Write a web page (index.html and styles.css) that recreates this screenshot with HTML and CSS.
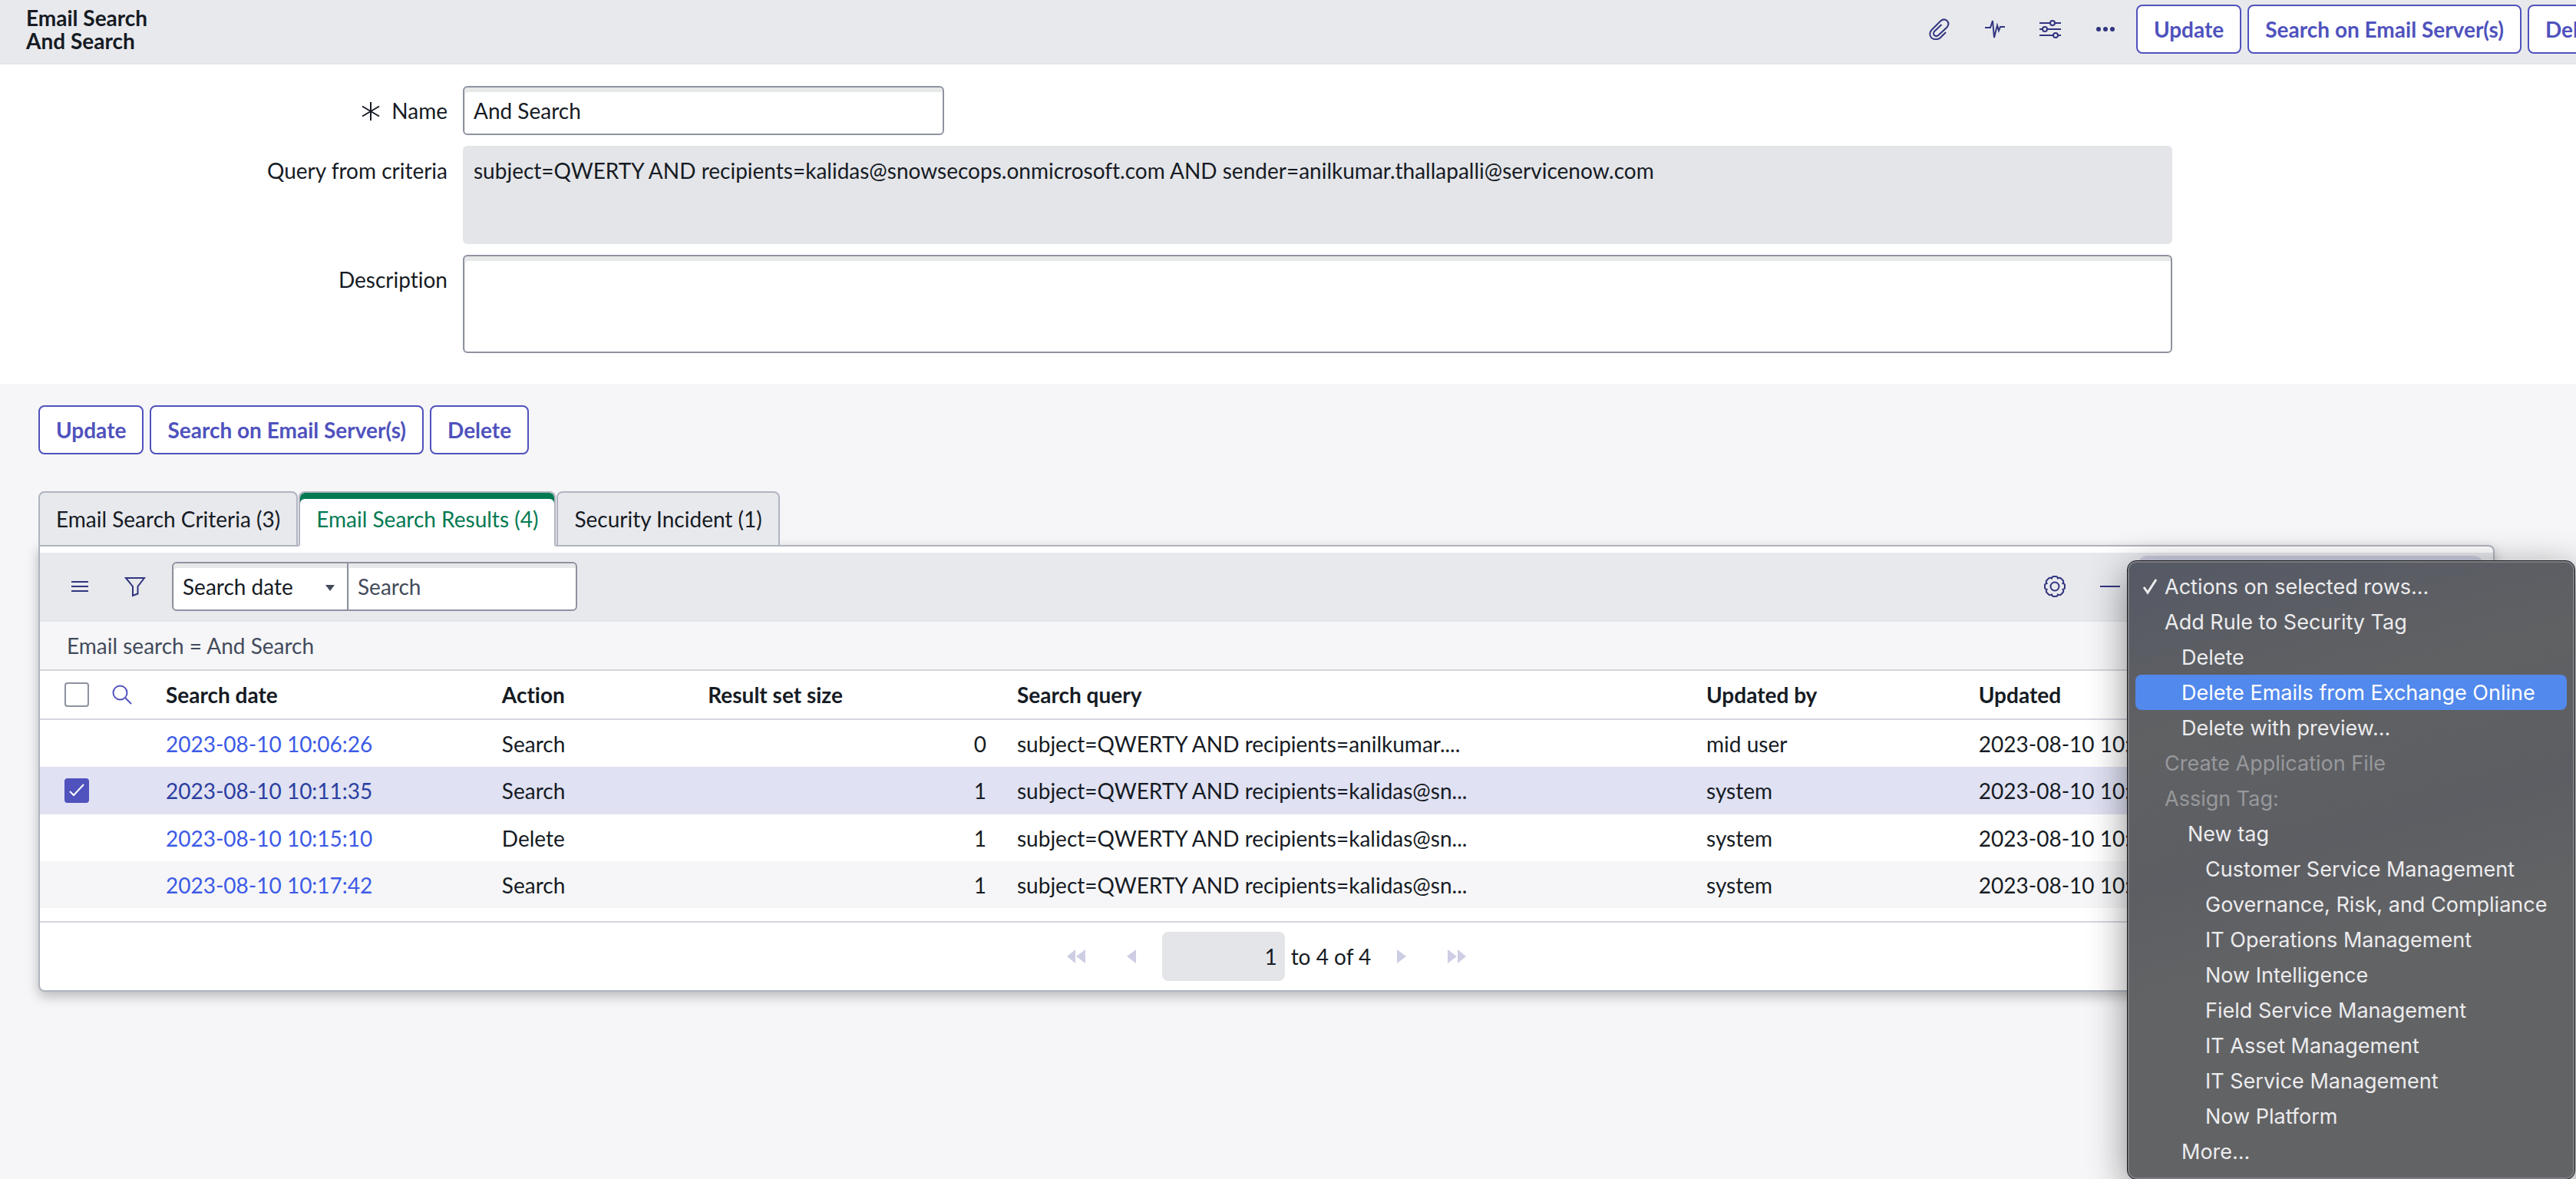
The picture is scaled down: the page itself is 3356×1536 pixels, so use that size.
FILE: index.html
```html
<!DOCTYPE html>
<html lang="en">
<head>
  <meta charset="UTF-8" />
  <title>And Search | Email Search</title>
  <link rel="stylesheet" href="styles.css">
</head>
<body>
  <header class="header">
    <h1 class="title">Email Search<br />And Search</h1>
    <div class="header-actions">
      <button class="icon-btn" aria-label="Attachments">
        <svg width="28" height="28" viewBox="0 0 28 28"><path d="M22 18l-7 7c-3 2.800-8 3-11.500.500-3-3-3-7.500 0-10.500L15 3.500c3-2.700 6-2.700 8.500-.500 2.500 2.500 2.500 5.500 0 8.500l-11 10.200c-2 1.800-4 1.800-5.500.300S5.800 18 7.500 16.500l9-8.500" /></svg>
      </button>
      <button class="icon-btn" aria-label="Activity">
        <svg width="28" height="28" viewBox="0 0 28 28"><path d="M1 12h7l3-9 2 22L17 9l2 7 2-5h6" /></svg>
      </button>
      <button class="icon-btn" aria-label="Personalize form">
        <svg width="28" height="28" viewBox="0 0 28 28"><path d="M0 6h14M20 6h8M0 14h4M10 14h18M0 22h18M24 22h4" /><circle cx="17" cy="6" r="3" /><circle cx="7" cy="14" r="3" /><circle cx="21" cy="22" r="3" /></svg>
      </button>
      <button class="icon-btn" aria-label="More options">
        <svg class="solid" width="28" height="28" viewBox="0 0 28 28"><circle cx="5" cy="14" r="3" /><circle cx="14" cy="14" r="3" /><circle cx="23" cy="14" r="3" /></svg>
      </button>
      <button class="btn">Update</button>
      <button class="btn">Search on Email Server(s)</button>
      <button class="btn">Delete</button>
    </div>
  </header>

  <form class="form">
    <label class="label" for="name">
      <svg class="required" width="26" height="26" viewBox="0 0 26 26"><path d="M13 1v24M2 6.500l22 13M24 6.500l-22 13" /></svg>
      Name
    </label>
    <input class="field name-field" type="text" id="name" value="And Search" />
    <label class="label" for="query">Query from criteria</label>
    <textarea class="field readonly" id="query" readonly>subject=QWERTY AND recipients=kalidas@snowsecops.onmicrosoft.com AND sender=anilkumar.thallapalli@servicenow.com</textarea>
    <label class="label" for="description">Description</label>
    <textarea class="field" id="description"></textarea>
  </form>

  <main class="main">
    <div class="form-buttons">
      <button class="btn">Update</button>
      <button class="btn">Search on Email Server(s)</button>
      <button class="btn">Delete</button>
    </div>

    <div class="tabs" role="tablist">
      <button class="tab" role="tab">Email Search Criteria (3)</button>
      <button class="tab active" role="tab" aria-selected="true">Email Search Results (4)</button>
      <button class="tab" role="tab">Security Incident (1)</button>
    </div>

    <section class="panel">
      <div class="toolbar">
        <button class="tool-btn" aria-label="List controls">
          <svg width="24" height="28" viewBox="0 0 24 28"><path d="M1 8h22M1 14h22M1 20h22" /></svg>
        </button>
        <button class="tool-btn" aria-label="Filter">
          <svg width="28" height="28" viewBox="0 0 28 28"><path d="M2 3h24l-8.500 11v9.500L11 26V14z" /></svg>
        </button>
        <div class="search-group">
          <div class="select-wrap">
            <select class="field search-field" aria-label="Search field">
              <option>Search date</option>
            </select>
            <svg class="caret" width="12" height="8" viewBox="0 0 12 8"><path d="M0 0h12L6 8z" /></svg>
          </div>
          <input class="field search-text" type="text" placeholder="Search" aria-label="Search" />
        </div>
        <div class="toolbar-right">
          <button class="tool-btn" aria-label="Personalize list">
            <svg width="30" height="30" viewBox="0 0 30 30"><path d="M11 4.500Q11.500 2 13.500 2h3Q18.500 2 19 4.500Q21.500 3 23 4.500L25.500 7Q27 8.500 25.500 11Q28 11.500 28 13.500v3Q28 18.500 25.500 19Q27 21.500 25.500 23L23 25.500Q21.500 27 19 25.500Q18.500 28 16.500 28h-3Q11.500 28 11 25.500Q8.500 27 7 25.500L4.500 23Q3 21.500 4.500 19Q2 18.500 2 16.500v-3Q2 11.500 4.500 11Q3 8.500 4.500 7L7 4.500Q8.500 3 11 4.500z" /><circle cx="15" cy="15" r="5.500" /></svg>
          </button>
          <button class="tool-btn" aria-label="Collapse">
            <svg width="26" height="28" viewBox="0 0 26 28"><path d="M0 14h26" /></svg>
          </button>
          <div class="row-actions">
            <select class="actions-select" aria-label="Actions on selected rows">
              <option>Actions on selected rows...</option>
            </select>
            <div class="menu" role="menu">
              <button class="item" role="menuitem">
                <svg class="tick" width="20" height="22" viewBox="0 0 20 22"><path d="M2 12l5 7L18 2" /></svg>Actions on selected rows...
              </button>
              <button class="item" role="menuitem">Add Rule to Security Tag</button>
              <button class="item indent" role="menuitem">Delete</button>
              <button class="item indent highlighted" role="menuitem">Delete Emails from Exchange Online</button>
              <button class="item indent" role="menuitem">Delete with preview...</button>
              <button class="item" role="menuitem" disabled>Create Application File</button>
              <button class="item" role="menuitem" disabled>Assign Tag:</button>
              <button class="item tag" role="menuitem">New tag</button>
              <button class="item subtag" role="menuitem">Customer Service Management</button>
              <button class="item subtag" role="menuitem">Governance, Risk, and Compliance</button>
              <button class="item subtag" role="menuitem">IT Operations Management</button>
              <button class="item subtag" role="menuitem">Now Intelligence</button>
              <button class="item subtag" role="menuitem">Field Service Management</button>
              <button class="item subtag" role="menuitem">IT Asset Management</button>
              <button class="item subtag" role="menuitem">IT Service Management</button>
              <button class="item subtag" role="menuitem">Now Platform</button>
              <button class="item indent" role="menuitem">More...</button>
            </div>
          </div>
        </div>
      </div>

      <div class="breadcrumb">Email search = And Search</div>

      <table class="list">
        <colgroup>
          <col class="col-check" />
          <col class="col-date" />
          <col class="col-action" />
          <col class="col-size" />
          <col class="col-query" />
          <col class="col-by" />
          <col />
        </colgroup>
        <thead>
          <tr>
            <th>
              <div class="check-cell">
                <input class="check" type="checkbox" aria-label="Select all" />
                <button class="find" aria-label="Search columns">
                  <svg width="26" height="26" viewBox="0 0 26 26"><circle cx="10.500" cy="10.500" r="9" /><path d="M17 17l8 8" /></svg>
                </button>
              </div>
            </th>
            <th>Search date</th>
            <th>Action</th>
            <th>Result set size</th>
            <th>Search query</th>
            <th>Updated by</th>
            <th>Updated</th>
          </tr>
        </thead>
        <tbody>
          <tr>
            <td></td>
            <td><a href="#">2023-08-10 10:06:26</a></td>
            <td>Search</td>
            <td class="num">0</td>
            <td>subject=QWERTY AND recipients=anilkumar....</td>
            <td>mid user</td>
            <td>2023-08-10 10:06:26</td>
          </tr>
          <tr class="selected">
            <td><div class="check-cell"><input class="check" type="checkbox" aria-label="Select row" checked /></div></td>
            <td><a href="#">2023-08-10 10:11:35</a></td>
            <td>Search</td>
            <td class="num">1</td>
            <td>subject=QWERTY AND recipients=kalidas@sn...</td>
            <td>system</td>
            <td>2023-08-10 10:11:35</td>
          </tr>
          <tr>
            <td></td>
            <td><a href="#">2023-08-10 10:15:10</a></td>
            <td>Delete</td>
            <td class="num">1</td>
            <td>subject=QWERTY AND recipients=kalidas@sn...</td>
            <td>system</td>
            <td>2023-08-10 10:15:10</td>
          </tr>
          <tr class="striped">
            <td></td>
            <td><a href="#">2023-08-10 10:17:42</a></td>
            <td>Search</td>
            <td class="num">1</td>
            <td>subject=QWERTY AND recipients=kalidas@sn...</td>
            <td>system</td>
            <td>2023-08-10 10:17:42</td>
          </tr>
        </tbody>
      </table>

      <div class="pager">
        <button class="page-btn end" aria-label="First page" disabled>
          <svg width="24" height="18" viewBox="0 0 24 18"><path d="M11 0v18L0 9zM24 0v18L12 9z" /></svg>
        </button>
        <button class="page-btn" aria-label="Previous page" disabled>
          <svg width="12" height="18" viewBox="0 0 12 18"><path d="M12 0v18L0 9z" /></svg>
        </button>
        <input class="page-input" type="text" value="1" aria-label="Go to row" readonly />
        <span class="page-text">to 4 of 4</span>
        <button class="page-btn" aria-label="Next page" disabled>
          <svg width="12" height="18" viewBox="0 0 12 18"><path d="M0 0v18l12-9z" /></svg>
        </button>
        <button class="page-btn end" aria-label="Last page" disabled>
          <svg width="24" height="18" viewBox="0 0 24 18"><path d="M0 0v18l12-9zM13 0v18l11-9z" /></svg>
        </button>
      </div>
    </section>
  </main>
</body>
</html>
```
FILE: styles.css
```css
* {
  box-sizing: border-box;
}
body {
  margin: 0;
  min-height: 100vh;
  overflow: hidden;
  background: #f6f6f8;
  color: #161b24;
  font-family: Lato, sans-serif;
  font-size: 28px;
  font-variant-ligatures: none;
}
button, input, select, textarea {
  margin: 0;
  font: inherit;
  font-variant-ligatures: none;
  color: inherit;
}
button {
  padding: 0;
  border: none;
  background: none;
}
svg {
  display: block;
  fill: none;
  stroke: #32357f;
  stroke-width: 2;
}
svg.solid {
  fill: #32357f;
  stroke: none;
}

/* header */
.header {
  display: flex;
  justify-content: space-between;
  align-items: flex-start;
  min-height: 84px;
  padding: 6px 0 0 34px;
  overflow: hidden;
  background: #e8e9ed;
  border-bottom: 2px solid #e3e5e6;
}
.title {
  margin: 2px 0 0;
  font-size: 28px;
  line-height: 30px;
  font-weight: bold;
}
.header-actions {
  display: flex;
  gap: 8px;
  margin-right: -66px;
}
.icon-btn {
  display: flex;
  align-items: center;
  justify-content: center;
  width: 64px;
  height: 64px;
}
.btn {
  height: 64px;
  padding: 0 21px;
  border: 2px solid #4f52bd;
  border-radius: 8px;
  background: #fff;
  color: #4f52bd;
  font-weight: bold;
  white-space: nowrap;
}

/* form */
.form {
  display: grid;
  grid-template-columns: 583fr 2227fr 506fr;
  gap: 14px 20px;
  padding: 28px 0 40px;
  background: #fff;
}
.label {
  grid-column: 1;
  display: flex;
  justify-content: flex-end;
  gap: 14px;
  padding-top: 12px;
  line-height: 40px;
}
.required {
  margin-top: 8px;
  stroke: #161b24;
}
.field {
  height: 64px;
  padding: 0 12px;
  border: 2px solid #8e92a0;
  border-radius: 6px;
  background: #fff;
  box-shadow: inset 1px 6px 0 #e7e9e8;
}
.form .field {
  grid-column: 2;
  width: 100%;
}
.form .name-field {
  width: 627px;
}
textarea.field {
  display: block;
  height: 128px;
  padding: 10px 12px;
  line-height: 40px;
  resize: none;
}
.form .readonly {
  border-color: #e4e5e9;
  background: #e4e5e9;
  box-shadow: none;
}

/* related lists */
.main {
  padding: 28px 106px 0 50px;
}
.form-buttons {
  display: flex;
  gap: 8px;
  margin-bottom: 48px;
}
.tabs {
  position: relative;
  z-index: 1;
  display: flex;
  gap: 1px;
  margin-bottom: -2px;
}
.tab {
  height: 72px;
  padding: 0 21px;
  border: 2px solid #b0b4c0;
  border-radius: 8px 8px 0 0;
  background: #e8e9ed;
}
.tab.active {
  border-bottom-color: #fff;
  background: #fff;
  color: #047a52;
  box-shadow: inset 0 8px 0 #047a52;
}
.panel {
  padding-top: 8px;
  border: 2px solid #b0b4c0;
  border-radius: 0 8px 8px 8px;
  background: #fff;
  box-shadow: 0 6px 16px rgba(0, 0, 0, 0.25);
}
.toolbar {
  display: flex;
  align-items: center;
  height: 90px;
  padding: 0 20px 0 16px;
  background: #e8e9ed;
  border-bottom: 2px solid #e4e5ea;
}
.tool-btn {
  display: flex;
  align-items: center;
  justify-content: center;
  width: 72px;
  height: 64px;
}
.search-group {
  display: flex;
  margin-left: 12px;
}
.select-wrap {
  position: relative;
}
.search-field {
  display: block;
  width: 230px;
  appearance: none;
  border-radius: 6px 0 0 6px;
}
.caret {
  position: absolute;
  right: 18px;
  top: 30px;
  fill: #434b5b;
  stroke: none;
  pointer-events: none;
}
.search-text {
  width: 300px;
  margin-left: -2px;
  border-radius: 0 6px 6px 0;
}
.search-text::placeholder {
  color: #434b5b;
}
.toolbar-right {
  display: flex;
  margin-left: auto;
}
.row-actions {
  position: relative;
  margin-left: 7px;
}
.actions-select {
  display: block;
  width: 436px;
  height: 64px;
  padding: 0 12px;
  appearance: none;
  border: 2px solid #8e92a0;
  border-radius: 6px;
  background: #fff;
  box-shadow: 0 0 0 8px #cbcde0;
}

/* open dropdown */
.menu {
  position: absolute;
  z-index: 2;
  left: -21px;
  top: -2px;
  width: 584px;
  padding: 10px 10px 13px;
  border: 1px solid #17181a;
  border-radius: 12px;
  background: linear-gradient(165deg, #555965 0%, #606163 25%, #5d5e63 45%, #626365 60%);
  box-shadow: inset 0 0 0 2px #7b7d82, 0 12px 50px rgba(0, 0, 0, 0.45);
  color: #ececee;
  font-family: Inter, sans-serif;
  font-size: 27px;
}
.item {
  display: flex;
  align-items: center;
  width: 100%;
  height: 46px;
  padding-left: 38px;
  border-radius: 8px;
  white-space: nowrap;
}
.item:disabled {
  color: #97989c;
}
.item.indent {
  padding-left: 60px;
}
.item.tag {
  padding-left: 68px;
}
.item.subtag {
  padding-left: 91px;
}
.item.highlighted {
  background: #5289ec;
  color: #fff;
}
.tick {
  margin: 0 9px 0 -29px;
  stroke: #ececee;
  stroke-width: 3;
}

.breadcrumb {
  padding: 11px 35px;
  border-bottom: 2px solid #d5d6de;
  background: #f6f6f8;
  color: #434b5b;
  line-height: 40px;
}

/* list */
.list {
  width: 100%;
  table-layout: fixed;
  border-collapse: separate;
  border-spacing: 0;
  padding-bottom: 17px;
}
.col-check { width: 148px; }
.col-date { width: 13.7%; }
.col-action { width: 8.4%; }
.col-size { width: 12.6%; }
.col-query { width: 28.1%; }
.col-by { width: 11.1%; }
.list th, .list td {
  height: 61px;
  padding: 0 16px;
  text-align: left;
  white-space: nowrap;
}
.list th {
  height: 64px;
  border-bottom: 2px solid #d5d6de;
}
.list a {
  color: #3c5ae6;
  text-decoration: none;
}
.list .num {
  padding-right: 24px;
  text-align: right;
}
.list .selected td {
  height: 62px;
  background: #e0e1f3;
}
.list .selected a {
  color: #2b3f9f;
}
.striped td {
  background: #f6f6f8;
}
.check-cell {
  display: flex;
  align-items: center;
  gap: 30px;
  padding-left: 16px;
}
.check {
  width: 32px;
  height: 32px;
  appearance: none;
  border: 2px solid #8e92a0;
  border-radius: 4px;
  background: #fff;
}
.check:checked {
  border-color: #5052bd;
  background: #5052bd url("data:image/svg+xml,%3Csvg xmlns='http://www.w3.org/2000/svg' viewBox='0 0 28 28'%3E%3Cpath d='M5 15l5 5L23 6' fill='none' stroke='white' stroke-width='2'/%3E%3C/svg%3E");
}
.find svg {
  stroke: #5052bd;
}

/* pager */
.pager {
  display: flex;
  align-items: center;
  justify-content: center;
  padding: 12px 0;
  border-top: 2px solid #d5d6de;
}
.page-btn {
  padding: 0 34px;
}
.page-btn.end {
  padding: 0 20px;
}
.page-btn svg {
  fill: #cdcde4;
  stroke: none;
}
.page-input {
  width: 160px;
  height: 64px;
  padding: 0 10px;
  border: none;
  border-radius: 8px;
  background: #e4e5e9;
  text-align: right;
}
.page-text {
  margin-left: 8px;
}
```
